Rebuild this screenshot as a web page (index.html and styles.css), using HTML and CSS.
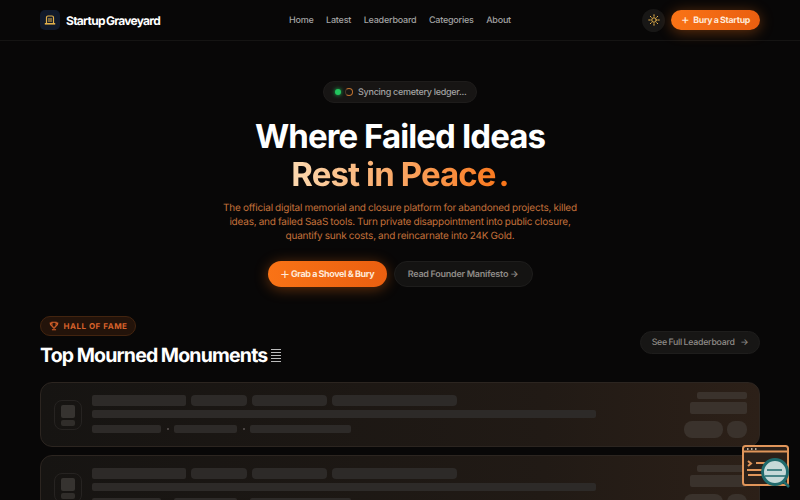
FILE: index.html
```html
<!DOCTYPE html>
<html lang="en">
  <head>
    <meta charset="UTF-8" />
    <meta name="viewport" content="width=device-width, initial-scale=1.0" />
    <title>Startup Graveyard</title>
    <link rel="stylesheet" href="styles.css">
  </head>
  <body>
    <header class="nav">
      <a class="brand" href="#">
        <span class="brand-icon">
          <svg width="12" height="10" viewBox="0 0 12 10" fill="none" stroke="#e2b04a" stroke-width="1.2">
            <path d="M2.5 8V2.5Q2.5 1 4 1H8Q9.5 1 9.5 2.5V8" />
            <path d="M4 4H8M4 6H8" />
            <path d="M.8 8.8H11.2" stroke-width="1.6" />
          </svg>
        </span>
        <span class="brand-name">Startup Graveyard</span>
      </a>
      <nav class="nav-links">
        <a href="#">Home</a>
        <a href="#">Latest</a>
        <a href="#">Leaderboard</a>
        <a href="#">Categories</a>
        <a href="#">About</a>
      </nav>
      <div class="nav-actions">
        <button class="theme-btn">
          <svg width="12" height="12" viewBox="0 0 24 24" fill="none" stroke="#e9b44c" stroke-width="2" stroke-linecap="round">
            <circle cx="12" cy="12" r="4.5" />
            <path d="M12 1.5v3M12 19.5v3M1.5 12h3M19.5 12h3M4.6 4.6l2 2M17.4 17.4l2 2M4.6 19.4l2-2M17.4 6.6l2-2" />
          </svg>
        </button>
        <button class="btn-primary btn-small"><span class="plus">+</span>Bury a Startup</button>
      </div>
    </header>

    <section class="hero">
      <div class="sync-pill">
        <span class="dot"></span>
        <span class="spinner"></span>
        <span>Syncing cemetery ledger...</span>
      </div>
      <h1>Where Failed Ideas<br /><span class="accent">Rest in Peace<span class="stop">.</span></span></h1>
      <p>The official digital memorial and closure platform for abandoned projects, killed ideas, and failed SaaS tools. Turn private disappointment into public closure, quantify sunk costs, and reincarnate into 24K Gold.</p>
      <div class="hero-actions">
        <button class="btn-primary btn-large"><span class="plus-big">+</span>Grab a Shovel &amp; Bury</button>
        <button class="btn-ghost">Read Founder Manifesto &rarr;</button>
      </div>
    </section>

    <section class="fame">
      <div class="fame-head">
        <div>
          <span class="badge">
            <svg width="10" height="10" viewBox="0 0 24 24" fill="none" stroke="#d9622a" stroke-width="2.6">
              <path d="M7 3h10v7a5 5 0 0 1-10 0z" />
              <path d="M7 5H3c0 4 1.500 6 4 6M17 5h4c0 4-1.500 6-4 6M12 15v4M7 21h10" />
            </svg>
            HALL OF FAME
          </span>
          <h2>Top Mourned Monuments <span class="menu-glyph"><i></i><i></i><i></i><i></i><i></i></span></h2>
        </div>
        <button class="btn-outline">See Full Leaderboard <span class="arrow">&rarr;</span></button>
      </div>

      <div class="card">
        <div class="thumb"><span class="thumb-a"></span><span class="thumb-b"></span></div>
        <div class="card-body">
          <div class="row">
            <span class="bar h11 w94"></span><span class="bar h11 pill w56"></span><span class="bar h11 pill w75"></span><span class="bar h11 pill w125"></span>
          </div>
          <span class="bar h8 w504"></span>
          <div class="row meta">
            <span class="bar h8 w69"></span><span class="tick"></span><span class="bar h8 w63"></span><span class="tick"></span><span class="bar h8 w101"></span>
          </div>
        </div>
        <div class="card-side">
          <span class="bar h7 w50"></span>
          <span class="bar h12 w57"></span>
          <div class="row"><span class="bar chip w39"></span><span class="bar chip w20"></span></div>
        </div>
      </div>

      <div class="card">
        <div class="thumb"><span class="thumb-a"></span><span class="thumb-b"></span></div>
        <div class="card-body">
          <div class="row">
            <span class="bar h11 w94"></span><span class="bar h11 pill w56"></span><span class="bar h11 pill w75"></span><span class="bar h11 pill w125"></span>
          </div>
          <span class="bar h8 w504"></span>
          <div class="row meta">
            <span class="bar h8 w69"></span><span class="tick"></span><span class="bar h8 w63"></span><span class="tick"></span><span class="bar h8 w101"></span>
          </div>
        </div>
        <div class="card-side">
          <span class="bar h7 w50"></span>
          <span class="bar h12 w57"></span>
          <div class="row"><span class="bar chip w39"></span><span class="bar chip w20"></span></div>
        </div>
      </div>
    </section>

    <svg class="float-icon" width="50" height="44" viewBox="0 0 50 44" fill="none">
      <rect x="1" y="1" width="45" height="39" rx="2.500" fill="#2b2019" stroke="#e0955a" stroke-width="2" />
      <path d="M1 6.500H46" stroke="#e0955a" stroke-width="2" />
      <path d="M5 4h1.500M9 4h1.500M13 4h1.500" stroke="#e8d9c8" stroke-width="1.400" />
      <path d="M6 16l3 2.500-3 2.500" stroke="#e0955a" stroke-width="2" />
      <path d="M5 25h16M6 30h18M14 18h10" stroke="#e0955a" stroke-width="2" />
      <circle cx="33" cy="27" r="12.500" fill="#c5d9d8" stroke="#1f6a6c" stroke-width="3" />
      <path d="M25 25h15M23 31h21" stroke="#1f6a6c" stroke-width="1.600" />
      <path d="M42 37l5 5" stroke="#1f6a6c" stroke-width="2.500" />
    </svg>
  </body>
</html>
```

FILE: styles.css
```css
* {
  box-sizing: border-box;
}

body {
  margin: 0;
  height: 500px;
  overflow: hidden;
  position: relative;
  background: #080707;
  color: #fff;
  font-family: 'Inter', 'Liberation Sans', sans-serif;
  text-rendering: geometricPrecision;
}

button {
  font-family: inherit;
  text-rendering: inherit;
  border: none;
  cursor: pointer;
}

a {
  text-decoration: none;
  color: inherit;
}

/* top bar */
.nav {
  height: 41px;
  padding: 0 40px;
  display: grid;
  grid-template-columns: 1fr auto 1fr;
  align-items: center;
  border-bottom: 1px solid #151413;
}

.brand {
  display: flex;
  align-items: center;
  gap: 6px;
}

.brand-icon {
  width: 20px;
  height: 20px;
  border-radius: 5px;
  background: #111a2b;
  display: flex;
  align-items: center;
  justify-content: center;
}

.brand-name {
  font-size: 12px;
  font-weight: 700;
  letter-spacing: -0.72px;
  word-spacing: -1px;
}

.nav-links {
  display: flex;
  gap: 12.500px;
  font-size: 9px;
  font-weight: 500;
  letter-spacing: -0.22px;
  color: #a3a3a3;
}

.nav-actions {
  display: flex;
  justify-content: flex-end;
  align-items: center;
  gap: 6px;
}

.theme-btn {
  width: 23px;
  height: 23px;
  border-radius: 50%;
  background: #181716;
  padding: 0;
  display: flex;
  align-items: center;
  justify-content: center;
}

.btn-primary {
  background: linear-gradient(90deg, #f97316, #ea5f10);
  color: #fff;
  font-weight: 700;
  border-radius: 999px;
  box-shadow: 0 2px 14px rgba(249, 115, 22, 0.38);
}

.btn-small {
  height: 20px;
  width: 89px;
  font-size: 8.800px;
  letter-spacing: -0.3px;
  word-spacing: -0.3px;
  padding: 0;
  display: flex;
  align-items: center;
  justify-content: center;
  color: #ffe9d8;
}

.plus {
  font-size: 13px;
  font-weight: 400;
  margin-right: 4px;
}

/* hero */
.hero {
  display: flex;
  flex-direction: column;
  align-items: center;
  text-align: center;
  padding-top: 40px;
}

.sync-pill {
  height: 22px;
  width: 154px;
  padding-left: 11px;
  display: flex;
  align-items: center;
  border-radius: 999px;
  background: #171514;
  border: 1px solid #1e1c1b;
  color: #a3a3a3;
  font-size: 9px;
  font-weight: 500;
  letter-spacing: -0.25px;
  word-spacing: -0.3px;
  white-space: nowrap;
}

.dot {
  width: 6px;
  height: 6px;
  border-radius: 50%;
  background: #22c55e;
  box-shadow: 0 0 4px #22c55e;
  margin-right: 4px;
}

.spinner {
  width: 8px;
  height: 8px;
  border-radius: 50%;
  border: 1.500px solid #c0722f;
  border-left-color: #4a3a2c;
  margin-right: 5px;
}

h1 {
  margin: 14px 0 0;
  font-size: 33px;
  line-height: 38px;
  font-weight: 700;
  letter-spacing: -0.9px;
}

.accent {
  background: linear-gradient(90deg, #fcd9b0, #f97316);
  -webkit-background-clip: text;
  background-clip: text;
  color: transparent;
}

.stop {
  margin-left: 3px;
}

.hero p {
  width: 370px;
  margin: 8px 0 0;
  font-size: 10px;
  line-height: 14px;
  letter-spacing: -0.2px;
  word-spacing: -0.4px;
  color: #c2703a;
}

.hero-actions {
  display: flex;
  gap: 7px;
  margin-top: 18px;
}

.btn-large {
  height: 26px;
  width: 119px;
  font-size: 9px;
  letter-spacing: -0.38px;
  word-spacing: -0.2px;
  padding: 0;
  display: flex;
  align-items: center;
  justify-content: center;
  color: #ffe9d8;
}

.plus-big {
  font-size: 16px;
  font-weight: 300;
  margin-right: 1px;
  position: relative;
  top: -1px;
}

.btn-ghost {
  height: 26px;
  width: 139px;
  padding: 0;
  border-radius: 999px;
  background: #141312;
  border: 1px solid #1e1d1c;
  color: #8f8b87;
  font-size: 9px;
  font-weight: 600;
  letter-spacing: -0.22px;
  word-spacing: -0.3px;
}

/* hall of fame */
.fame {
  padding: 29px 40px 0;
}

.fame-head {
  display: flex;
  justify-content: space-between;
  align-items: center;
}

.badge {
  height: 20px;
  width: 96px;
  display: flex;
  align-items: center;
  justify-content: center;
  gap: 5px;
  border-radius: 999px;
  background: #23130a;
  border: 1px solid #43240f;
  color: #d9622a;
  font-size: 8px;
  font-weight: 700;
  letter-spacing: 0.5px;
}

h2 {
  margin: 7px 0 0;
  font-size: 19.500px;
  line-height: 24px;
  font-weight: 700;
  letter-spacing: -0.8px;
  word-spacing: -0.5px;
  display: flex;
  align-items: center;
  gap: 4px;
}

.menu-glyph {
  display: flex;
  flex-direction: column;
  gap: 2px;
  width: 10px;
}

.menu-glyph i {
  display: block;
  height: 1px;
  background: #bbb;
}

.btn-outline {
  height: 23px;
  width: 120px;
  padding: 0;
  margin-top: 1px;
  border-radius: 999px;
  background: #171615;
  border: 1px solid #1e1d1c;
  color: #8f8b87;
  font-size: 8.800px;
  font-weight: 500;
  letter-spacing: -0.25px;
  word-spacing: -0.6px;
}

.arrow {
  margin-left: 4px;
}

/* loading cards */
.card {
  height: 65px;
  margin-top: 15px;
  padding: 9px 12px 0 13px;
  display: flex;
  border-radius: 12px;
  border: 1px solid #2c2520;
  background: linear-gradient(90deg, #161412, #211a15 70%, #2c2018);
}

.card + .card {
  margin-top: 8px;
}

.thumb {
  width: 28px;
  height: 30px;
  margin-top: 8px;
  border-radius: 8px;
  border: 1px solid #262321;
  display: flex;
  flex-direction: column;
  align-items: center;
  justify-content: center;
  gap: 2px;
}

.thumb-a {
  width: 14px;
  height: 13px;
  border-radius: 2px;
  background: #363330;
}

.thumb-b {
  width: 14px;
  height: 6px;
  border-radius: 2px;
  background: #302d2a;
}

.card-body {
  flex: 1;
  margin-left: 10px;
  display: flex;
  flex-direction: column;
  gap: 4px;
  align-items: flex-start;
  padding-top: 3px;
}

.row {
  display: flex;
  align-items: center;
  gap: 5px;
}

.meta {
  margin-top: 3px;
}

.bar {
  display: block;
  background: #2d2a28;
  border-radius: 2px;
}

.pill {
  border-radius: 4px;
}

.tick {
  width: 2px;
  height: 2px;
  margin: 0 0.5px;
  background: #4a4442;
}

.card-side {
  display: flex;
  flex-direction: column;
  align-items: flex-end;
  gap: 3px;
}

.card-side .bar {
  background: #3a322c;
}

.card-side .row {
  margin-top: 4px;
  gap: 4px;
}

.chip {
  height: 17px;
  border-radius: 8px;
}

.h7 { height: 7px; }
.h8 { height: 8px; }
.h11 { height: 11px; }
.h12 { height: 12px; }
.w20 { width: 20px; }
.w39 { width: 39px; }
.w50 { width: 50px; }
.w56 { width: 56px; }
.w57 { width: 57px; }
.w63 { width: 63px; }
.w69 { width: 69px; }
.w75 { width: 75px; }
.w94 { width: 94px; }
.w101 { width: 101px; }
.w125 { width: 125px; }
.w504 { width: 504px; }

/* floating widget over the page */
.float-icon {
  position: absolute;
  left: 742px;
  top: 445px;
}
```
